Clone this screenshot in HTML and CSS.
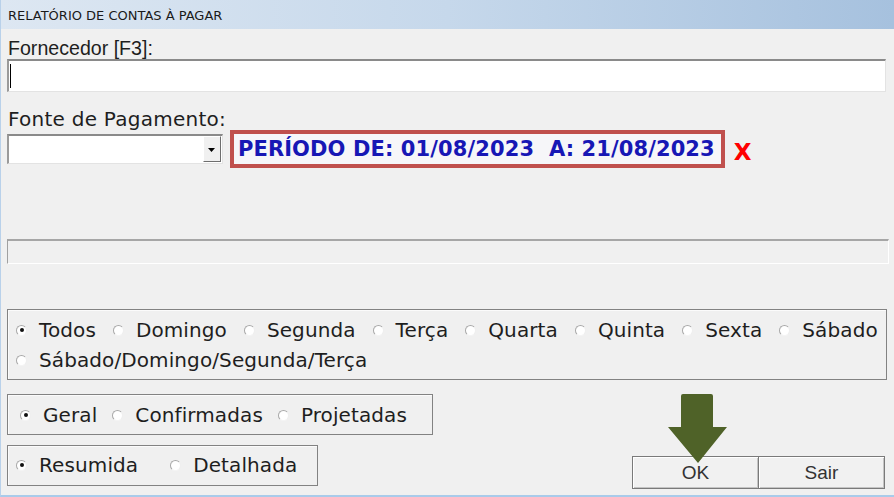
FILE: index.html
```html
<!DOCTYPE html>
<html lang="pt">
<head>
<meta charset="utf-8">
<title>Relatório de Contas à Pagar</title>
<link rel="stylesheet" href="styles.css">
</head>
<body>
<div class="window">
  <div class="titlebar">RELATÓRIO DE CONTAS À PAGAR</div>
  <div class="content">
    <div class="lbl-forn">Fornecedor [F3]:</div>
    <div class="input"><span class="caret"></span></div>
    <div class="lbl-fonte">Fonte de Pagamento:</div>
    <div class="row-fonte">
      <div class="combo">
        <div class="combo-btn">
          <svg width="8" height="5" viewBox="0 0 8 5"><polygon points="0,0 7,0 3.5,4" fill="#000"/></svg>
        </div>
      </div>
      <div class="periodo">PERÍODO DE: 01/08/2023&nbsp;&nbsp;A: 21/08/2023</div>
      <div class="close-x">X</div>
    </div>
    <div class="progress"></div>
    <div class="group g-dias">
      <div class="opts">
        <span class="opt"><i class="radio on"></i>Todos</span>
        <span class="opt"><i class="radio"></i>Domingo</span>
        <span class="opt"><i class="radio"></i>Segunda</span>
        <span class="opt"><i class="radio"></i>Terça</span>
        <span class="opt"><i class="radio"></i>Quarta</span>
        <span class="opt"><i class="radio"></i>Quinta</span>
        <span class="opt"><i class="radio"></i>Sexta</span>
        <span class="opt"><i class="radio"></i>Sábado</span>
      </div>
      <div class="opts">
        <span class="opt"><i class="radio"></i>Sábado/Domingo/Segunda/Terça</span>
      </div>
    </div>
    <div class="bottom">
      <div class="left-col">
        <div class="group g-tipo">
          <div class="opts">
            <span class="opt"><i class="radio on"></i>Geral</span>
            <span class="opt"><i class="radio"></i>Confirmadas</span>
            <span class="opt"><i class="radio"></i>Projetadas</span>
          </div>
        </div>
        <div class="group g-modo">
          <div class="opts">
            <span class="opt"><i class="radio on"></i>Resumida</span>
            <span class="opt"><i class="radio"></i>Detalhada</span>
          </div>
        </div>
      </div>
      <div class="buttons">
        <div class="btn">OK</div>
        <div class="btn">Sair</div>
      </div>
    </div>
  </div>
  <svg class="arrow" width="62" height="72" viewBox="0 0 62 72">
    <path d="M16 1 H44 Q46 1 46 3 V34 H60 L31 70 L1 34 H14 V3 Q14 1 16 1 Z" fill="#4f6228"/>
  </svg>
</div>
</body>
</html>
```
FILE: styles.css
```css
html, body {
  margin: 0;
  padding: 0;
  background: #f0f0f0;
}
.window {
  position: relative;
  width: 894px;
  height: 497px;
  box-sizing: border-box;
  border-left: 1px solid #b9d1ea;
  border-bottom: 2px solid #a9cbea;
  background: #f0f0f0;
  overflow: hidden;
}
.titlebar {
  height: 29px;
  box-sizing: border-box;
  padding: 8px 0 0 7px;
  background: linear-gradient(to right, #dde7f2 0%, #c6d8eb 50%, #a6c1de 100%);
  font-family: "DejaVu Sans", sans-serif;
  font-size: 13px;
  line-height: 15px;
  color: #1a1a1a;
}
.content {
  padding: 8px 8px 0 6px;
}
.lbl-forn {
  font-family: "Liberation Sans", Arial, sans-serif;
  font-size: 19.6px;
  line-height: 22px;
  color: #1e1e1e;
  padding-left: 1px;
}
.input {
  height: 33px;
  box-sizing: border-box;
  background: #fff;
  border-top: 2px solid #8a8a8a;
  border-left: 2px solid #9a9a9a;
  border-right: 1px solid #e3e3e3;
  border-bottom: 1px solid #e3e3e3;
  padding: 3px 0 0 1px;
}
.caret {
  display: block;
  width: 1px;
  height: 24px;
  background: #000;
}
.lbl-fonte {
  margin-top: 17px;
  font-family: "DejaVu Sans", sans-serif;
  font-size: 20px;
  letter-spacing: 0.25px;
  line-height: 21px;
  color: #1e1e1e;
  padding-left: 1px;
}
.row-fonte {
  display: flex;
  align-items: center;
  height: 38px;
}
.combo {
  width: 216px;
  height: 30px;
  box-sizing: border-box;
  background: #fff;
  border-top: 2px solid #8a8a8a;
  border-left: 2px solid #9a9a9a;
  border-right: 1px solid #e3e3e3;
  border-bottom: 1px solid #e3e3e3;
  display: flex;
  justify-content: flex-end;
  padding: 0 1px 1px 0;
}
.combo-btn {
  width: 18px;
  box-sizing: border-box;
  background: #f0f0f0;
  border-top: 1px solid #fff;
  border-left: 1px solid #fff;
  border-right: 1px solid #6e6e6e;
  border-bottom: 1px solid #6e6e6e;
  display: flex;
  align-items: center;
  justify-content: center;
  padding-top: 2px;
}
.periodo {
  margin-left: 7px;
  height: 38px;
  box-sizing: border-box;
  border: 4px solid #c0504d;
  background: #f6f6f9;
  padding: 0 6px 0 4px;
  font-family: "DejaVu Sans", sans-serif;
  font-weight: bold;
  font-size: 21px;
  letter-spacing: 0.1px;
  line-height: 30px;
  color: #1717b5;
  white-space: nowrap;
}
.close-x {
  margin-left: 9px;
  margin-top: 6px;
  font-family: "DejaVu Sans", sans-serif;
  font-weight: bold;
  font-size: 23px;
  color: #ff0000;
}
.progress {
  margin-top: 71px;
  margin-right: -3px;
  height: 25px;
  box-sizing: border-box;
  border-top: 2px solid #a6a6a6;
  border-left: 1px solid #a0a0a0;
  border-right: 1px solid #fff;
  border-bottom: 1px solid #fff;
}
.group {
  box-sizing: border-box;
  border: 1px solid #828282;
  box-shadow: inset 1px 1px 0 #fbfbfb;
  font-family: "DejaVu Sans", sans-serif;
  font-size: 20px;
  letter-spacing: 0.1px;
  color: #1e1e1e;
}
.g-dias {
  margin-top: 45px;
  margin-right: -1px;
  height: 71px;
  padding: 5px 0 4px 8px;
}
.opts {
  display: flex;
  align-items: center;
  height: 30px;
  gap: 17px;
}
.opt {
  display: flex;
  align-items: center;
  white-space: nowrap;
  line-height: 30px;
}
.radio {
  display: inline-block;
  position: relative;
  width: 11px;
  height: 11px;
  box-sizing: border-box;
  border-radius: 50%;
  background: #fff;
  border: 1px solid;
  border-color: #a8a8a8 #eeeeee #f4f4f4 #a8a8a8;
  margin-right: 12px;
}
.radio.on::after {
  content: "";
  position: absolute;
  left: 2.5px;
  top: 2.5px;
  width: 4px;
  height: 4px;
  border-radius: 50%;
  background: #111;
}
.bottom {
  display: flex;
  justify-content: space-between;
  align-items: flex-end;
}
.left-col {
  padding-bottom: 3px;
}
.g-tipo {
  margin-top: 14px;
  width: 426px;
  height: 41px;
  padding: 5px 0 3px 12px;
}
.g-tipo .opts {
  gap: 15px;
}
.g-modo {
  margin-top: 10px;
  width: 311px;
  height: 41px;
  padding: 4px 0 4px 8px;
}
.g-modo .opts {
  gap: 32px;
}
.buttons {
  display: flex;
  margin-right: 1px;
}
.btn {
  width: 127px;
  height: 33px;
  box-sizing: border-box;
  border: 1px solid #7a7a7a;
  box-shadow: inset 1px 1px 0 #ffffff, inset -1px -1px 0 #c4c4c4;
  background: #f1f1f1;
  font-family: "Liberation Sans", Arial, sans-serif;
  font-size: 19px;
  line-height: 31px;
  text-align: center;
  color: #333;
}
.btn + .btn {
  border-left: none;
  width: 126px;
}
.arrow {
  position: absolute;
  left: 666px;
  top: 393px;
}
```
